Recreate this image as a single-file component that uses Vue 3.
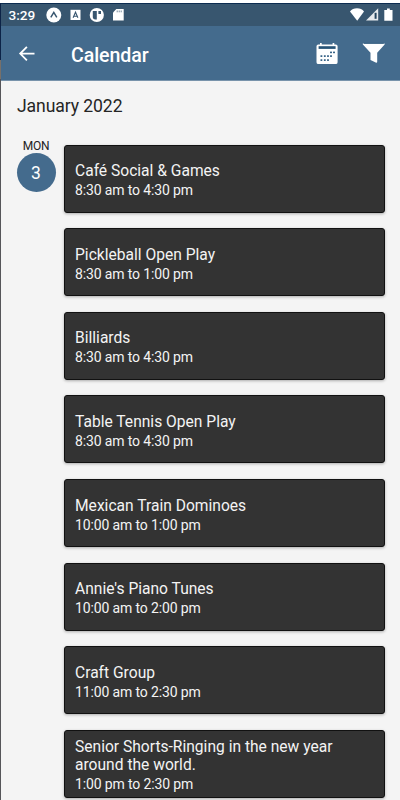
<script setup>
    import { ref } from 'vue';

    const month = ref('January 2022');
    const day = ref({ name: 'MON', number: 3 });

    const events = ref([
        { title: 'Café Social & Games', start: '8:30 am', end: '4:30 pm' },
        { title: 'Pickleball Open Play', start: '8:30 am', end: '1:00 pm' },
        { title: 'Billiards', start: '8:30 am', end: '4:30 pm' },
        { title: 'Table Tennis Open Play', start: '8:30 am', end: '4:30 pm' },
        { title: 'Mexican Train Dominoes', start: '10:00 am', end: '1:00 pm' },
        { title: 'Annie\'s Piano Tunes', start: '10:00 am', end: '2:00 pm' },
        { title: 'Craft Group', start: '11:00 am', end: '2:30 pm' },
        { title: 'Senior Shorts-Ringing in the new year around the world.', start: '1:00 pm', end: '2:30 pm' },
    ]);

    // dots on the calendar icon
    const dots = [
        [15, 9.3], [18, 9.3],
        [5.4, 13], [8.8, 13], [12, 13], [15, 13],
        [5.4, 17], [8.8, 17], [12, 17],
    ];
</script>

<template>
    <div class="screen">
        <div class="status-bar">
            <span class="clock">3:29</span>
            <svg class="status-left" width="80" height="16" viewBox="0 0 80 16">
                <circle cx="7.8" cy="8" r="7.5" fill="#fff" />
                <path d="M4.8 10.3 7.8 5.4l3 4.9" fill="none" stroke="#38566f" stroke-width="1.5" />
                <rect x="24.5" y="2.8" width="10" height="10.2" fill="#fff" />
                <path d="M27.1 10.8 29.5 5.2l2.4 5.6M28 9.2h3.2" fill="none" stroke="#38566f" stroke-width="1.1" />
                <circle cx="50.8" cy="8" r="7.1" fill="#fff" />
                <path d="M46.8 4h4v8.4h-1.4a2.6 2.6 0 0 1-2.6-2.6zM52.4 4h2.6v3h-2.6z" fill="#38566f" />
                <path d="M70.3 2h7.4v11.6H67V5.4z" fill="#fff" />
                <path d="M71.2 3.5v1.8M73.2 3.5v1.8M75.2 3.5v1.8" stroke="#38566f" stroke-width=".7" />
            </svg>
            <svg class="status-right" width="46" height="16" viewBox="0 0 46 16">
                <path d="M1 4.6Q3.5 1.3 8 1.3t7 3.3L8.2 13.8z" fill="#fff" />
                <path d="M29.2 1.3v12.2H17z" fill="#e6eaed" />
                <path d="M25.6 5.8h2v6h-2z" fill="#24445e" />
                <path d="M38 1.5h2.8v1.4h2.7v10.8h-8.2V2.9H38z" fill="#fff" />
            </svg>
        </div>

        <div class="header">
            <svg class="back" width="18" height="18" viewBox="0 0 18 18">
                <path d="M16.5 9.6H2.5M8.9 2.8 2.2 9.6l6.7 6.8" fill="none" stroke="#fff" stroke-width="1.8" />
            </svg>
            <h1 class="title">Calendar</h1>
            <svg class="calendar" width="22" height="23" viewBox="0 -1 22 23">
                <path d="M4 0h1.7v1.5h10.9V0h1.7v1.5h1.5A1.8 1.8 0 0 1 21.6 3.3v15.9a1.9 1.9 0 0 1-1.9 1.9H2.4a1.9 1.9 0 0 1-1.9-1.9V3.3a1.8 1.8 0 0 1 1.8-1.8H4z" fill="#fff" />
                <path d="M2.6 3.2h17v2.7h-17z" fill="#285477" />
                <rect v-for="dot in dots" :x="dot[0] - 0.9" :y="dot[1] - 0.7" width="1.8" height="1.6" fill="#24547b" />
            </svg>
            <svg class="filter" width="24" height="22" viewBox="0 0 24 22">
                <path d="M1 1.4h21.4q.8.4 0 1.4l-7.2 8v9q0 1.3-1.5.8l-5.2-2.7v-7.1L1.1 2.8q-.9-1-.1-1.4z" fill="#fff" />
                <path d="M1.8 1.4h20" stroke="#285477" stroke-width=".8" />
            </svg>
        </div>

        <div class="content">
            <h2 class="month">{{ month }}</h2>
            <div class="agenda">
                <div class="day">
                    <span class="day-name">{{ day.name }}</span>
                    <span class="day-number">{{ day.number }}</span>
                </div>
                <div class="events">
                    <div class="event" v-for="event in events">
                        <div class="event-title">{{ event.title }}</div>
                        <div class="event-time">{{ event.start }} to {{ event.end }}</div>
                    </div>
                </div>
            </div>
        </div>
    </div>
</template>

<style>
    body{
        margin: 0;
        overflow: hidden;
    }
</style>

<style scoped>
    .screen{
        box-sizing: border-box;
        height: 800px;
        overflow: hidden;
        padding: 3px 0 0 1px;
        background: linear-gradient(#ffffff 3px, #0c2347 3px 60px, #77706a 60px 79px, #555559 79px);
        font-family: Roboto, "Liberation Sans", sans-serif;
    }
    .status-bar{
        box-sizing: border-box;
        display: flex;
        align-items: center;
        height: 23px;
        padding: 0 5px 0 7.5px;
        border-top: 1px solid #0c2c50;
        background: #38566f;
        color: #ffffff;
    }
    .clock{
        width: 37.5px;
        font-size: 13.6px;
        font-weight: 500;
    }
    .status-right{
        margin-left: auto;
    }
    .header{
        box-sizing: border-box;
        display: flex;
        align-items: center;
        height: 55px;
        padding: 0 14px 0 17px;
        border-bottom: 1px solid #7893ab;
        background: #446b8d;
        color: #ffffff;
    }
    .title{
        margin: 0 auto 0 35px;
        padding-top: 4px;
        font-size: 19.6px;
        font-weight: 500;
        letter-spacing: -0.1px;
    }
    .filter{
        margin-left: 24px;
    }
    .content{
        height: 719px;
        background: #f4f4f4;
    }
    .month{
        margin: 0;
        padding: 14px 0 0 16px;
        font-size: 17.6px;
        font-weight: 400;
        line-height: 22px;
        letter-spacing: -0.1px;
        color: #252525;
    }
    .agenda{
        display: flex;
        padding: 22px 15px 0 15px;
    }
    .day{
        display: flex;
        flex-direction: column;
        align-items: center;
        width: 40px;
        margin-right: 8px;
    }
    .day-name{
        font-size: 12px;
        line-height: 14px;
        letter-spacing: -0.2px;
        color: #222222;
    }
    .day-number{
        width: 39px;
        height: 39px;
        border-radius: 50%;
        background: #446b8d;
        color: #ffffff;
        font-size: 17.5px;
        line-height: 41px;
        text-align: center;
    }
    .events{
        display: flex;
        flex: 1;
        flex-direction: column;
        gap: 15.57px;
        padding-top: 5.8px;
    }
    .event{
        box-sizing: border-box;
        display: flex;
        flex-direction: column;
        justify-content: center;
        height: 68px;
        padding: 5px 40px 0 10px;
        border: 1px solid #111111;
        border-radius: 3px;
        background: #333333;
        box-shadow: 0 1px 3px rgba(0, 0, 0, 0.3);
        color: #f4f4f4;
    }
    .event-title{
        font-size: 15.6px;
        line-height: 18px;
    }
    .event-time{
        margin-top: 1px;
        font-size: 14px;
        line-height: 19px;
        letter-spacing: -0.14px;
    }
</style>
